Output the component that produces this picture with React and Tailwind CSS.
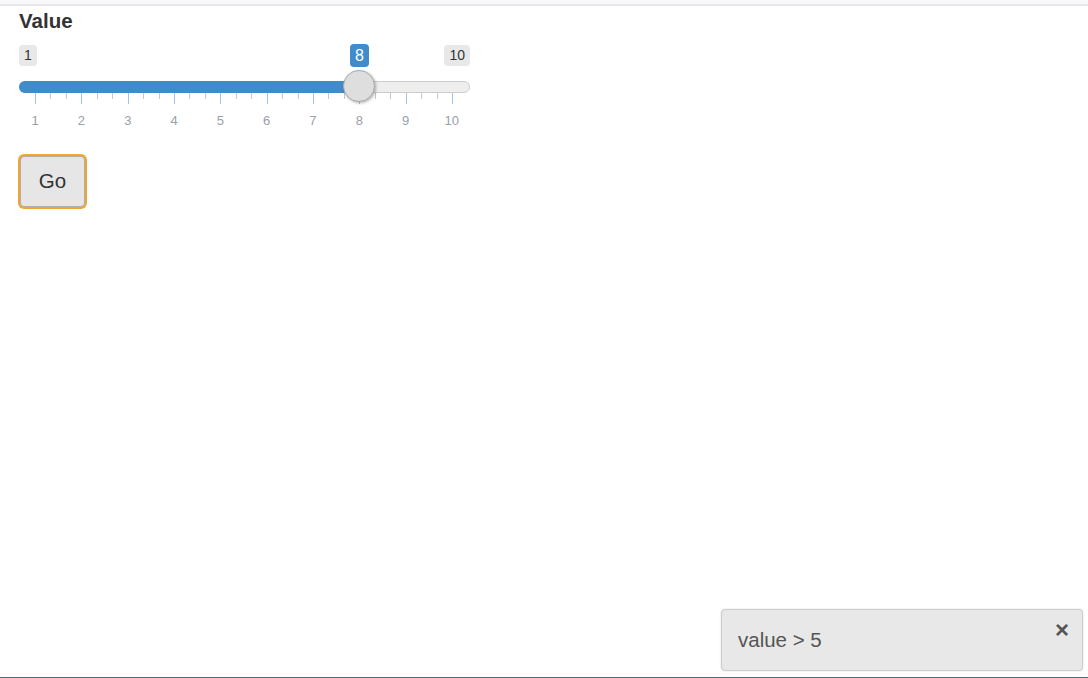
import React from "react";

const STEP = 46.33;
const majors = Array.from({ length: 10 }, (_, i) => 16 + i * STEP);
const minors = [];
for (let i = 0; i < 9; i++) {
  minors.push(16 + i * STEP + STEP / 3, 16 + i * STEP + (2 * STEP) / 3);
}

function Slider() {
  return (
    <div className="flex flex-col w-[451px]">
      <div className="relative flex justify-between items-start h-[23px]">
        <span className="mt-[1px] h-[21px] px-[5px] rounded-[4px] bg-[#e8e8e8] text-[14px] leading-[21px] text-[#333]">1</span>
        <span className="mt-[1px] h-[21px] px-[5px] rounded-[4px] bg-[#e8e8e8] text-[14px] leading-[21px] text-[#333]">10</span>
        <span className="absolute left-[331px] top-0 h-[23px] w-[19px] rounded-[4px] bg-[#428bca] text-[16px] leading-[23px] text-white text-center">8</span>
      </div>
      <div className="relative mt-[14px] h-[12px] rounded-full border border-[#cccccc] bg-[#eeeeee]">
        <div className="absolute -left-px -top-px w-[345px] h-[12px] rounded-l-full bg-[#428bca]" />
        <div className="absolute left-[323px] -top-[12px] w-[32px] h-[32px] rounded-full bg-[#dedede] border border-[#ababab] shadow-[1px_1px_3px_rgba(0,0,0,0.3)]" />
      </div>
      <svg width="451" height="12" className="block">
        {minors.map((x, i) => (
          <line key={"m" + i} x1={Math.round(x) + 0.5} x2={Math.round(x) + 0.5} y1="0" y2="6" stroke="#c8c8c8" strokeWidth="1" />
        ))}
        {majors.map((x, i) => (
          <line key={"M" + i} x1={Math.round(x) + 0.5} x2={Math.round(x) + 0.5} y1="0" y2="11" stroke="#a3c4e0" strokeWidth="1" />
        ))}
      </svg>
      <div className="grid grid-cols-10 w-[463px] -ml-[7px] mt-[8px] text-center text-[13px] leading-[16px] text-[#99a0aa]">
        {majors.map((_, i) => (
          <span key={i}>{i + 1}</span>
        ))}
      </div>
    </div>
  );
}

export default function App() {
  return (
    <div
      className="relative h-[678px] w-full bg-white border-b border-[#2f7c7e] overflow-hidden"
      style={{ fontFamily: '"Liberation Sans", Arial, sans-serif' }}
    >
      <div className="h-[4px] bg-[#f8f8f8] border-b-2 border-[#e6e6eb] box-content" />
      <div className="flex flex-col items-start pl-[19px]">
        <div className="text-[20.5px] font-bold text-[#333] leading-[27px] mt-[1px]">Value</div>
        <div className="mt-[10px]">
          <Slider />
        </div>
        <button className="mt-[27px] ml-[1px] w-[65px] h-[51px] rounded-[4px] border border-[#adadad] bg-[#e6e6e6] text-[20.5px] text-[#333] ring-2 ring-[#f0a732]">
          Go
        </button>
      </div>
      <div className="absolute right-[5px] bottom-[6px] w-[362px] h-[62px] flex items-center justify-between pl-[16px] pr-[13px] rounded-[4px] border border-[#cccccc] bg-[#e8e8e8] shadow-[0_0_2px_rgba(0,0,0,0.15)]">
        <span className="text-[20.5px] leading-[26px] text-[#555] mt-[-1px]">value &gt; 5</span>
        <span className="self-start mt-[7px] text-[24px] font-bold leading-[26px] text-[#555]">×</span>
      </div>
    </div>
  );
}
